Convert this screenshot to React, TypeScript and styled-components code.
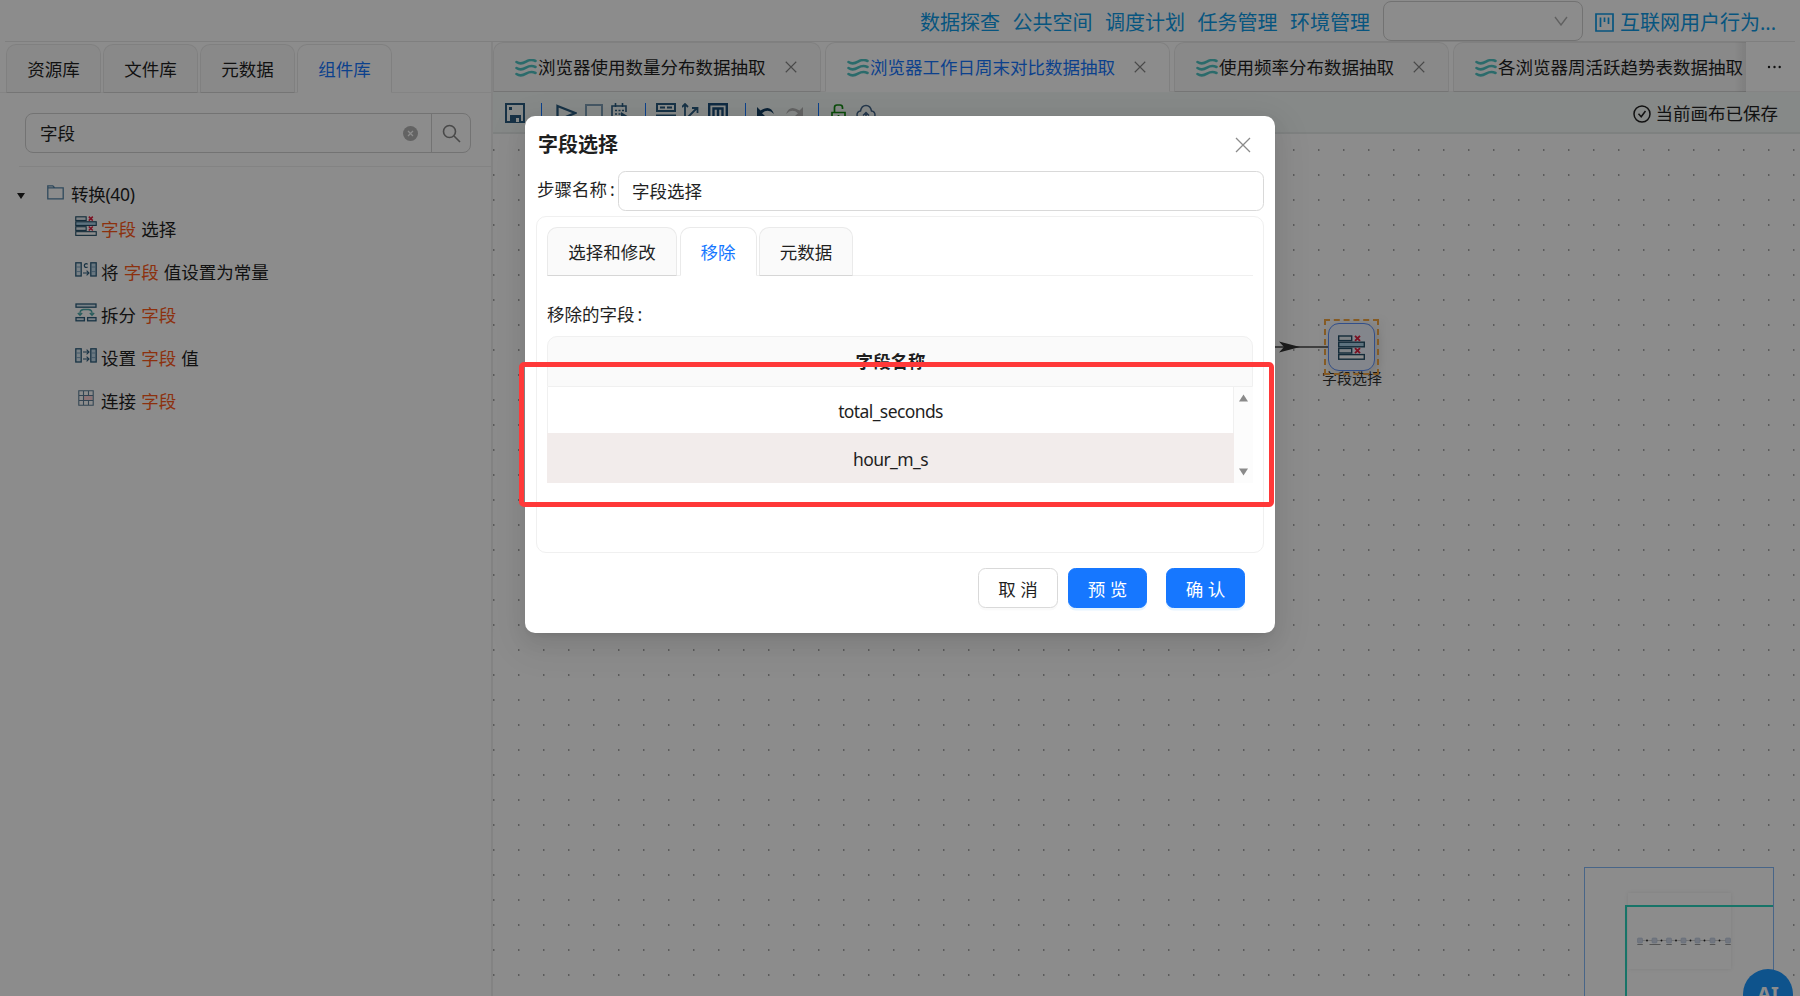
import React from "react";
import styled, { createGlobalStyle, css } from "styled-components";

const Global = createGlobalStyle`
  * { box-sizing: border-box; }
  html, body { margin: 0; height: 100%; overflow: hidden; background: #fff; }
  body {
    font-family: "Noto Sans", "Noto Sans CJK SC", sans-serif;
    font-size: 17.5px;
    line-height: 27.5px;
    color: #1f1f1f;
  }
  svg { display: block; flex: none; }
`;

const Page = styled.div`
  width: 1800px;
  height: 996px;
  position: relative;
  overflow: hidden;
  display: flex;
  flex-direction: column;
  background: #fff;
`;

/* ---------- header ---------- */
const Header = styled.header`
  height: 42px;
  flex: none;
  margin: 0 5px;
  border-bottom: 1px solid #e8e8e8;
  display: flex;
  justify-content: flex-end;
  align-items: flex-start;
  padding: 1px 21px 0 0;
  font-size: 20px;
  line-height: 43px;
  color: #0e9be8;
`;
const Nav = styled.nav`
  display: flex;
  gap: 12.5px;
  margin-right: 13px;
`;
const NavItem = styled.a`
  white-space: nowrap;
`;
const Select = styled.div`
  width: 200px;
  height: 40px;
  border: 1px solid #d0d0d0;
  border-radius: 8px;
  display: flex;
  align-items: center;
  justify-content: flex-end;
  padding-right: 14px;
  margin-right: 12px;
`;
const Project = styled.div`
  display: flex;
  align-items: center;
  gap: 6px;
  width: 179px;
  white-space: nowrap;
`;

/* ---------- body ---------- */
const Body = styled.div`
  flex: 1;
  min-height: 0;
  display: flex;
`;
const Side = styled.aside`
  width: 493px;
  flex: none;
  border-right: 2px solid #efefef;
  padding-top: 2px;
`;
const SideTabs = styled.div`
  display: flex;
  gap: 2px;
  padding-left: 6px;
  height: 49px;
  box-shadow: inset 0 -1px #f0f0f0;
`;

const tabFace = css<{ $active?: boolean }>`
  border: 1px solid #eaeaea;
  border-bottom-color: ${(p) => (p.$active ? "#fff" : "#d6d6d6")};
  border-radius: 10px 10px 0 0;
  background: ${(p) => (p.$active ? "#fff" : "#fafafa")};
  color: ${(p) => (p.$active ? "#1677ff" : "#1f1f1f")};
  display: flex;
  align-items: center;
  white-space: nowrap;
`;
const SideTab = styled.div<{ $active?: boolean }>`
  ${tabFace}
  width: 95px;
  justify-content: center;
  padding-top: 2px;
`;
const SearchRow = styled.div`
  margin: 20px 0 13px 25px;
  width: 446px;
  height: 40px;
  border: 1px solid #d2d2d2;
  border-radius: 8px;
  display: flex;
  align-items: center;
`;
const SearchText = styled.div`
  flex: 1;
  padding: 2px 0 0 14px;
`;
const SearchButton = styled.div`
  width: 39px;
  height: 38px;
  margin-left: 13px;
  border-left: 1px solid #d2d2d2;
  display: grid;
  place-items: center;
`;
const SideBody = styled.div`
  margin-left: 19px;
  border-top: 1px solid #efefef;
`;
const TreeHead = styled.div`
  display: flex;
  align-items: center;
  height: 30px;
  margin: 13px 0 0 -2px;
`;
const Caret = styled.i`
  border: 4.5px solid transparent;
  border-top: 6px solid #1f1f1f;
  border-bottom: 0;
  margin-right: 22px;
  margin-top: 2px;
`;
const FolderIcon = styled.svg`
  margin-top: -6px;
`;
const TreeTitle = styled.span`
  margin-left: 7px;
  letter-spacing: -0.3px;
`;
const TreeItem = styled.div`
  height: 43px;
  display: flex;
  align-items: center;
  padding-left: 56px;
  gap: 4px;
  white-space: pre;
  word-spacing: 0.6px;
  & svg { margin-top: -7px; }
`;
const TreeList = styled.div`
  margin-top: -2px;
`;
const Hit = styled.span`
  color: #ff5a1a;
`;

const Main = styled.main`
  flex: 1;
  min-width: 0;
  display: flex;
  flex-direction: column;
`;
const FileTabs = styled.div`
  height: 50px;
  flex: none;
  display: flex;
  box-shadow: inset 0 -1px #f0f0f0;
`;
const FileTabScroll = styled.div`
  width: 1253px;
  display: flex;
  gap: 4px;
  overflow: hidden;
  position: relative;
  &::after {
    content: "";
    position: absolute;
    right: 0;
    top: 0;
    bottom: 0;
    width: 12px;
    background: linear-gradient(90deg, transparent, rgba(0, 0, 0, 0.08));
  }
`;
const FileTab = styled.div<{ $active?: boolean; $w: number }>`
  ${tabFace}
  width: ${(p) => p.$w}px;
  flex: none;
  padding: 1px 0 0 21px;
  gap: 1px;
  & > svg:last-child { margin-left: 18px; margin-top: -1px; }
`;
const More = styled.div`
  flex: 1;
  display: grid;
  place-items: center;
  padding-left: 2px;
`;
const Toolbar = styled.div`
  height: 42px;
  flex: none;
  background: #f4f9f7;
  border-bottom: 2px solid #e6ebe9;
  display: flex;
  justify-content: space-between;
  align-items: center;
  padding: 2px 22px 0 11px;
`;
const Tools = styled.div`
  display: flex;
  align-items: center;
`;
const Tool = styled.span<{ $gap: number }>`
  margin-left: ${(p) => p.$gap}px;
`;
const Sep = styled.i<{ $gap: number }>`
  width: 1px;
  height: 20px;
  background: #1677ff;
  margin-left: ${(p) => p.$gap}px;
`;
const Saved = styled.div`
  display: flex;
  align-items: center;
  gap: 5px;
  padding-top: 1px;
`;
const Canvas = styled.div`
  flex: 1;
  position: relative;
  overflow: hidden;
  background: radial-gradient(circle at 0.8px 1px, #9a9a9a 0.5px, transparent 1.1px) 0 15px / 25px 25px;
`;

/* ---------- diagram ---------- */
const Edge = styled.svg`
  position: absolute;
  left: 700px;
  top: 203px;
`;
const Node = styled.div`
  position: absolute;
  left: 831px;
  top: 185px;
  width: 55px;
  height: 56px;
  display: grid;
  place-items: center;
  filter: drop-shadow(3px 3px 4px rgba(0, 0, 0, 0.15));
`;
const NodeFace = styled.div`
  width: 47px;
  height: 48px;
  border: 1.5px solid #5b8ff9;
  border-radius: 11px;
  background: #eff4ff;
  display: grid;
  place-items: center;
`;
const NodeFrame = styled.div`
  position: absolute;
  inset: 0;
  border: 2px dashed #f5a742;
`;
const NodeLabel = styled.div`
  position: absolute;
  left: 819px;
  top: 234px;
  width: 80px;
  text-align: center;
  font-size: 15px;
  line-height: 20px;
  color: #333;
`;
const MiniMap = styled.div`
  position: absolute;
  left: 1091px;
  top: 733px;
  width: 190px;
  height: 160px;
  border: 1px solid #84b8f8;
  background: #fff;
  overflow: hidden;
`;
const MiniPaper = styled.div`
  position: absolute;
  left: 43px;
  top: 25px;
  width: 103px;
  height: 76px;
  box-shadow: 0 0 4px rgba(0, 0, 0, 0.09);
`;
const MiniView = styled.div`
  position: absolute;
  left: 40px;
  top: 37px;
  width: 200px;
  height: 160px;
  border: 2px solid #2bd4be;
`;
const AiBadge = styled.div`
  position: absolute;
  left: 1743px;
  top: 969px;
  width: 50px;
  height: 50px;
  border-radius: 50%;
  background: #1b97ff;
  color: #fff;
  font: bold 20px/50px "Noto Sans", sans-serif;
  text-align: center;
`;

/* ---------- modal ---------- */
const Mask = styled.div`
  position: absolute;
  inset: 0;
  background: rgba(0, 0, 0, 0.45);
`;
const Modal = styled.section`
  position: absolute;
  left: 525px;
  top: 116px;
  width: 750px;
  height: 517px;
  background: #fff;
  border-radius: 10px;
  box-shadow: 0 7.5px 20px rgba(0, 0, 0, 0.08), 0 4px 7.5px -5px rgba(0, 0, 0, 0.12),
    0 11px 35px 10px rgba(0, 0, 0, 0.05);
  padding: 0 11px;
`;
const ModalHead = styled.div`
  height: 55px;
  display: flex;
  align-items: center;
  justify-content: space-between;
  padding: 3px 13px 0 2px;
  font-size: 20px;
  font-weight: 700;
`;
const StepRow = styled.div`
  display: flex;
  height: 40px;
`;
const StepLabel = styled.label`
  width: 82px;
  padding: 5px 0 0 1px;
  white-space: nowrap;
`;
const Colon = styled.span`
  margin-left: 3px;
`;
const Input = styled.div`
  flex: 1;
  border: 1px solid #d9d9d9;
  border-radius: 7.5px;
  padding: 6px 13px;
`;
const Card = styled.div`
  margin-top: 5px;
  height: 337px;
  border: 1px solid #f0f0f0;
  border-radius: 10px;
  padding: 10px;
`;
const CardTabs = styled.div`
  display: flex;
  gap: 2.5px;
  height: 49px;
  box-shadow: inset 0 -1px #f0f0f0;
`;
const CardTab = styled.div<{ $active?: boolean; $w: number }>`
  ${tabFace}
  width: ${(p) => p.$w}px;
  justify-content: center;
  padding-top: 2px;
`;
const FieldLabel = styled.div`
  margin: 25px 0 8px;
  line-height: 27px;
`;
const TableHead = styled.div`
  height: 51px;
  border: 1px solid #f0f0f0;
  border-radius: 10px 10px 0 0;
  background: #fafafa;
  font-weight: 700;
  text-align: center;
  line-height: 49px;
  padding-right: 19px;
`;
const TableBody = styled.div`
  display: flex;
  height: 96px;
`;
const Rows = styled.div`
  flex: 1;
  border: solid #f0f0f0;
  border-width: 0 1px;
`;
const Row = styled.div<{ $striped?: boolean }>`
  height: ${(p) => (p.$striped ? 50 : 46)}px;
  line-height: ${(p) => (p.$striped ? 52 : 49)}px;
  background: ${(p) => (p.$striped ? "#f2eceb" : "#fff")};
  margin: ${(p) => (p.$striped ? "0 -1px" : "0")};
  text-align: center;
  letter-spacing: -0.6px;
`;
const Track = styled.div`
  width: 19px;
  background: #fcfcfc;
  display: flex;
  flex-direction: column;
  align-items: center;
  justify-content: space-between;
  padding: 7px 0;
`;
const Actions = styled.div`
  display: flex;
  justify-content: flex-end;
  padding: 15px 19px 0 0;
`;
const Button = styled.button<{ $primary?: boolean; $gap?: number }>`
  width: ${(p) => (p.$primary ? 79 : 80)}px;
  height: 40px;
  margin-left: ${(p) => p.$gap ?? 0}px;
  border: 1px solid ${(p) => (p.$primary ? "#1677ff" : "#d9d9d9")};
  border-radius: 7.5px;
  background: ${(p) => (p.$primary ? "#1677ff" : "#fff")};
  color: ${(p) => (p.$primary ? "#fff" : "#1f1f1f")};
  box-shadow: 0 2.5px 0 ${(p) => (p.$primary ? "rgba(5,145,255,0.1)" : "rgba(0,0,0,0.02)")};
  font: 17.5px/27.5px "Noto Sans", "Noto Sans CJK SC", sans-serif;
  padding: 3px 0 0;
  white-space: pre;
`;
const Callout = styled.div`
  position: absolute;
  left: 519px;
  top: 362px;
  width: 755px;
  height: 145px;
  border: 5px solid #ff3838;
  border-radius: 5px;
`;

/* ---------- icons ---------- */
const Cross = ({ size, color, w = 1.3 }: { size: number; color: string; w?: number }) => (
  <svg width={size} height={size} viewBox="0 0 16 16" stroke={color} strokeWidth={w} fill="none">
    <path d="M1 1 15 15M15 1 1 15" />
  </svg>
);
const Waves = () => (
  <svg width="22" height="18" viewBox="0 0 22 18" fill="none" stroke="#4fc4c4" strokeWidth="2.6" strokeLinecap="round">
    {[0, 6, 12].map((y) => (
      <path key={y} d={`M1.5 ${y + 3}C5 ${y + 5.5},8 ${y + 4.5},11 ${y + 2.7}S17 ${y + 0.3},20.500 ${y + 2}`} />
    ))}
  </svg>
);
const SelectFields = ({ w, h }: { w: number; h: number }) => (
  <svg width={w} height={h} viewBox="0 0 27 25" fill="none" stroke="#234f68" strokeWidth="1.4">
    <rect x=".7" y="1" width="13" height="4.6" fill="#e6edf2" />
    <rect x=".7" y="7.2" width="25.6" height="4.6" fill="#a9cfe6" />
    <rect x=".7" y="13.4" width="13" height="4.6" fill="#e6edf2" />
    <rect x=".7" y="19.6" width="25.6" height="4.6" fill="#fff" />
    <path d="m17 .8 5 5m0-5-5 5M17 13.2l5 5m0-5-5 5" stroke="#e0203f" strokeWidth="1.9" />
  </svg>
);
const Columns = ({ constant }: { constant?: boolean }) => (
  <svg width="22" height="15" viewBox="0 0 22 15" fill="none" stroke="#2d5d7c" strokeWidth="1.3">
    <rect x=".8" y=".8" width="5.4" height="13.2" fill="#dcebf5" />
    <rect x="15.8" y=".8" width="5.4" height="13.2" fill="#c0d9ea" />
    <path d="M1.500 5h4M1.500 9.6h4M16.500 5h4M16.500 9.6h4" strokeWidth=".8" stroke="#6b96b4" />
    <path d="M8 11h6m-2.4-2.4L14 11l-2.4 2.4" strokeWidth="1.1" />
    {constant ? (
      <path d="M12.6 2.3a1.9 1.9 0 1 0 0 2.6" strokeWidth="1.2" />
    ) : (
      <path d="M8 4h6m-2.4-2.4L14 4l-2.4 2.4" strokeWidth="1.1" />
    )}
  </svg>
);
const Split = () => (
  <svg width="22" height="19" viewBox="0 0 22 19" fill="none" stroke="#2d5d7c" strokeWidth="1.3">
    <rect x="1" y="1" width="20" height="3.2" fill="#dcebf5" />
    <rect x="1" y="14.6" width="8.4" height="3.2" fill="#dcebf5" />
    <rect x="12.6" y="14.6" width="8.4" height="3.2" fill="#dcebf5" />
    <path d="M5 12V9.5Q5.500 6.800 8.500 6.500h5q3 .3 3.500 3V12M2.800 10 5 12.300 7.200 10M14.800 10l2.200 2.300L19.200 10" stroke="#4ba9a9" />
  </svg>
);
const GridIcon = () => (
  <svg width="22" height="16" viewBox="-3 0 22 16" fill="none" stroke="#5f7f98" strokeWidth="1.1">
    <path d="M5.500 5.500h9v5h-9z" fill="#ffd2d6" stroke="none" />
    <path d="M.8.8h14.400v14.400H.8zM.8 5.500h14.400M.8 10.500h14.400M5.500.8v14.400M10.500.8v4.700M10.500 10.500v4.700" />
  </svg>
);
const ink = "#2b5c80";

const items: { icon: React.ReactNode; text: (string | { hit: string })[] }[] = [
  { icon: <SelectFields w={22} h={20} />, text: [{ hit: "字段" }, " 选择"] },
  { icon: <Columns constant />, text: ["将 ", { hit: "字段" }, " 值设置为常量"] },
  { icon: <Split />, text: ["拆分 ", { hit: "字段" }] },
  { icon: <Columns />, text: ["设置 ", { hit: "字段" }, " 值"] },
  { icon: <GridIcon />, text: ["连接 ", { hit: "字段" }] },
];

const files = [
  { name: "浏览器使用数量分布数据抽取", w: 328 },
  { name: "浏览器工作日周末对比数据抽取", w: 345, active: true },
  { name: "使用频率分布数据抽取", w: 275 },
  { name: "各浏览器周活跃趋势表数据抽取", w: 345 },
];

export default function App() {
  return (
    <>
      <Global />
      <Page>
        <Header>
          <Nav>
            {["数据探查", "公共空间", "调度计划", "任务管理", "环境管理"].map((t) => (
              <NavItem key={t}>{t}</NavItem>
            ))}
          </Nav>
          <Select>
            <svg width="14" height="10" viewBox="0 0 14 10" fill="none" stroke="#b0b0b0" strokeWidth="1.4">
              <path d="m1 1 6 8 6-8" />
            </svg>
          </Select>
          <Project>
            <svg width="19" height="19" viewBox="0 0 19 19" fill="none" stroke="#0e9be8" strokeWidth="1.7">
              <path d="M1 1h17v17H1zM5.500 4.500v9.500M9.500 4.500v4.500M13.500 4.500v6.500" />
            </svg>
            <span>互联网用户行为...</span>
          </Project>
        </Header>
        <Body>
          <Side>
            <SideTabs>
              <SideTab>资源库</SideTab>
              <SideTab>文件库</SideTab>
              <SideTab>元数据</SideTab>
              <SideTab $active>组件库</SideTab>
            </SideTabs>
            <SearchRow>
              <SearchText>字段</SearchText>
              <svg width="15" height="15" viewBox="0 0 15 15">
                <circle cx="7.500" cy="7.500" r="7.500" fill="#b4b4b4" />
                <path d="m5 5 5 5m0-5-5 5" stroke="#fff" strokeWidth="1.300" />
              </svg>
              <SearchButton>
                <svg width="19" height="19" viewBox="0 0 19 19" fill="none" stroke="#858585" strokeWidth="1.600">
                  <circle cx="7.500" cy="7.500" r="6" />
                  <path d="m12 12 6 6" />
                </svg>
              </SearchButton>
            </SearchRow>
            <SideBody>
              <TreeHead>
                <Caret />
                <FolderIcon width="17" height="15" viewBox="0 0 17 15" fill="none" stroke="#5585a8" strokeWidth="1.300">
                  <path d="M.8.8h5l1.800 2h8.600v11H.8zM.8 2.800h7" />
                </FolderIcon>
                <TreeTitle>转换(40)</TreeTitle>
              </TreeHead>
              <TreeList>
                {items.map((it, i) => (
                  <TreeItem key={i}>
                    {it.icon}
                    <span>
                      {it.text.map((t, j) => (typeof t === "string" ? t : <Hit key={j}>{t.hit}</Hit>))}
                    </span>
                  </TreeItem>
                ))}
              </TreeList>
            </SideBody>
          </Side>
          <Main>
            <FileTabs>
              <FileTabScroll>
                {files.map((f) => (
                  <FileTab key={f.name} $active={f.active} $w={f.w}>
                    <Waves />
                    <span>{f.name}</span>
                    <Cross size={12} color="#858585" w={1.5} />
                  </FileTab>
                ))}
              </FileTabScroll>
              <More>
                <svg width="14" height="4" fill="#1f1f1f">
                  <circle cx="2" cy="2" r="1.200" />
                  <circle cx="7.500" cy="2" r="1.200" />
                  <circle cx="12.700" cy="2" r="1.200" />
                </svg>
              </More>
            </FileTabs>
            <Toolbar>
              <Tools>
                <Tool $gap={1}>
                  <svg width="20" height="20" viewBox="0 0 20 20" fill="none" stroke={ink} strokeWidth="2">
                    <path d="M1 1h18v18H1z" />
                    <path d="M5 12h11v7H5zM4 4h3v3H4z" fill={ink} stroke="none" />
                    <path d="M11 15h3v4h-3z" fill="#f4f9f7" stroke="none" />
                  </svg>
                </Tool>
                <Sep $gap={16} />
                <Tool $gap={14}>
                  <svg width="21" height="20" viewBox="0 0 21 20" fill="none" stroke={ink} strokeWidth="2.300">
                    <path d="M1.500 3 19 10 1.500 17.500z" />
                  </svg>
                </Tool>
                <Tool $gap={8}>
                  <svg width="18" height="18" fill="none" stroke="#7f9fb6" strokeWidth="2">
                    <path d="M1 1h16v16H1z" />
                  </svg>
                </Tool>
                <Tool $gap={8}>
                  <svg width="18" height="20" viewBox="0 0 18 20" fill="none" stroke={ink} strokeWidth="1.600">
                    <path d="M8 18H1V3h14v6M4.500 0v4M11.500 0v4M4 7.500h2M7.500 7.500h2M11 7.500h2M4 11h2M7.500 11h2" />
                    <path d="M10 9l8 5-8 5z" fill={ink} stroke="none" />
                  </svg>
                </Tool>
                <Sep $gap={16} />
                <Tool $gap={10}>
                  <svg width="20" height="20" viewBox="0 0 20 20" fill="none" stroke={ink} strokeWidth="2">
                    <path d="M1 1h18v7H1zM4 4.500h5M11 4.500h5M0 12.500h20M0 17.500h20" />
                  </svg>
                </Tool>
                <Tool $gap={6}>
                  <svg width="17" height="20" viewBox="0 0 17 20" fill="none" stroke={ink} strokeWidth="1.800">
                    <path d="M3 1v17h12M0 4l3-3 3 3M3 17 15 5M10 5h5.500v5" />
                  </svg>
                </Tool>
                <Tool $gap={9}>
                  <svg width="20" height="20" viewBox="0 0 20 20" fill="none" stroke="#1c4e78" strokeWidth="2.400">
                    <path d="M1.200 1.200h17.600v17.600H1.200zM5.500 16V5.500h9V16M10 5.500V16" />
                  </svg>
                </Tool>
                <Sep $gap={17} />
                <Tool $gap={11}>
                  <svg width="19" height="16" viewBox="0 0 19 16" fill="#143e63">
                    <path d="M0 2v9h8L5 8.300Q11 3 17 9 13.500-1 3.500 5.500z" />
                  </svg>
                </Tool>
                <Tool $gap={8}>
                  <svg width="19" height="16" viewBox="0 0 19 16" fill="#b4b4b4">
                    <path d="M19 2v9h-8l3-2.700Q8 3 2 9 5.500-1 15.500 5.500z" />
                  </svg>
                </Tool>
                <Sep $gap={15} />
                <Tool $gap={12}>
                  <svg width="15" height="18" viewBox="0 0 15 18" fill="none" stroke="#158a15" strokeWidth="1.700">
                    <path d="M1 8.500h13V17H1zM3.500 8V3.500q0-2.500 2.500-2.500h3q2.500 0 2.500 2.500V5M7.500 11v3" />
                  </svg>
                </Tool>
                <Tool $gap={10}>
                  <svg width="20" height="18" viewBox="0 0 20 18" fill="none" stroke="#44668a" strokeWidth="1.500">
                    <path d="M5 15Q1 14.500 1 11t3.500-4Q5.500 1.500 10 1.500T15.500 7Q19 7.500 19 11t-4 4M10 17V9M7 11.500 10 8.500l3 3" />
                  </svg>
                </Tool>
              </Tools>
              <Saved>
                <svg width="18" height="18" viewBox="0 0 18 18" fill="none" stroke="#1f1f1f" strokeWidth="1.500">
                  <circle cx="9" cy="9" r="8" />
                  <path d="m5.500 8.800 2.700 3 4.300-5.800" />
                </svg>
                <span>当前画布已保存</span>
              </Saved>
            </Toolbar>
            <Canvas>
              <Edge width="140" height="20">
                <path d="M0 10H135" stroke="#444" strokeWidth="1.500" />
                <path d="M86 4.500 107 10 86 15.500 91 10z" fill="#333" />
              </Edge>
              <NodeLabel>字段选择</NodeLabel>
              <Node>
                <NodeFace>
                  <SelectFields w={27} h={25} />
                </NodeFace>
                <NodeFrame />
              </Node>
              <MiniMap>
                <MiniPaper>
                  <svg width="103" height="76" viewBox="0 0 103 76" fill="none">
                    <path d="M14 47.500H100" stroke="#bbb" strokeWidth=".7" />
                    {[12, 26.500, 41, 55.500, 69.500, 84.500, 100].map((x, i) => (
                      <g key={x}>
                        <rect x={x - 2.500} y="45" width="5" height="5" rx="1" fill="#cfd8e8" stroke="#b4c2da" strokeWidth=".6" />
                        <path d={`M${x - (i === 1 ? 5 : 2.700)} 51.500h${i === 1 ? 11 : 5.500}`} stroke="#999" strokeWidth="1" />
                        {i < 6 && <circle cx={x + 7} cy="47.500" r=".9" fill="#222" />}
                      </g>
                    ))}
                  </svg>
                </MiniPaper>
                <MiniView />
              </MiniMap>
            </Canvas>
          </Main>
        </Body>
        <AiBadge>AI</AiBadge>
        <Mask />
        <Modal>
          <ModalHead>
            <span>字段选择</span>
            <Cross size={16} color="#8a8a8a" />
          </ModalHead>
          <StepRow>
            <StepLabel>步骤名称<Colon>:</Colon></StepLabel>
            <Input>字段选择</Input>
          </StepRow>
          <Card>
            <CardTabs>
              <CardTab $w={130}>选择和修改</CardTab>
              <CardTab $w={77} $active>移除</CardTab>
              <CardTab $w={94}>元数据</CardTab>
            </CardTabs>
            <FieldLabel>移除的字段<Colon>:</Colon></FieldLabel>
            <TableHead>字段名称</TableHead>
            <TableBody>
              <Rows>
                <Row>total_seconds</Row>
                <Row $striped>hour_m_s</Row>
              </Rows>
              <Track>
                <svg width="9" height="8" fill="#8a8a8a"><path d="M4.500.5 9 7.500H0z" /></svg>
                <svg width="9" height="8" fill="#8a8a8a"><path d="M4.500 7.500 9 .5H0z" /></svg>
              </Track>
            </TableBody>
          </Card>
          <Actions>
            <Button>取 消</Button>
            <Button $primary $gap={10}>预 览</Button>
            <Button $primary $gap={19}>确 认</Button>
          </Actions>
        </Modal>
        <Callout />
      </Page>
    </>
  );
}
